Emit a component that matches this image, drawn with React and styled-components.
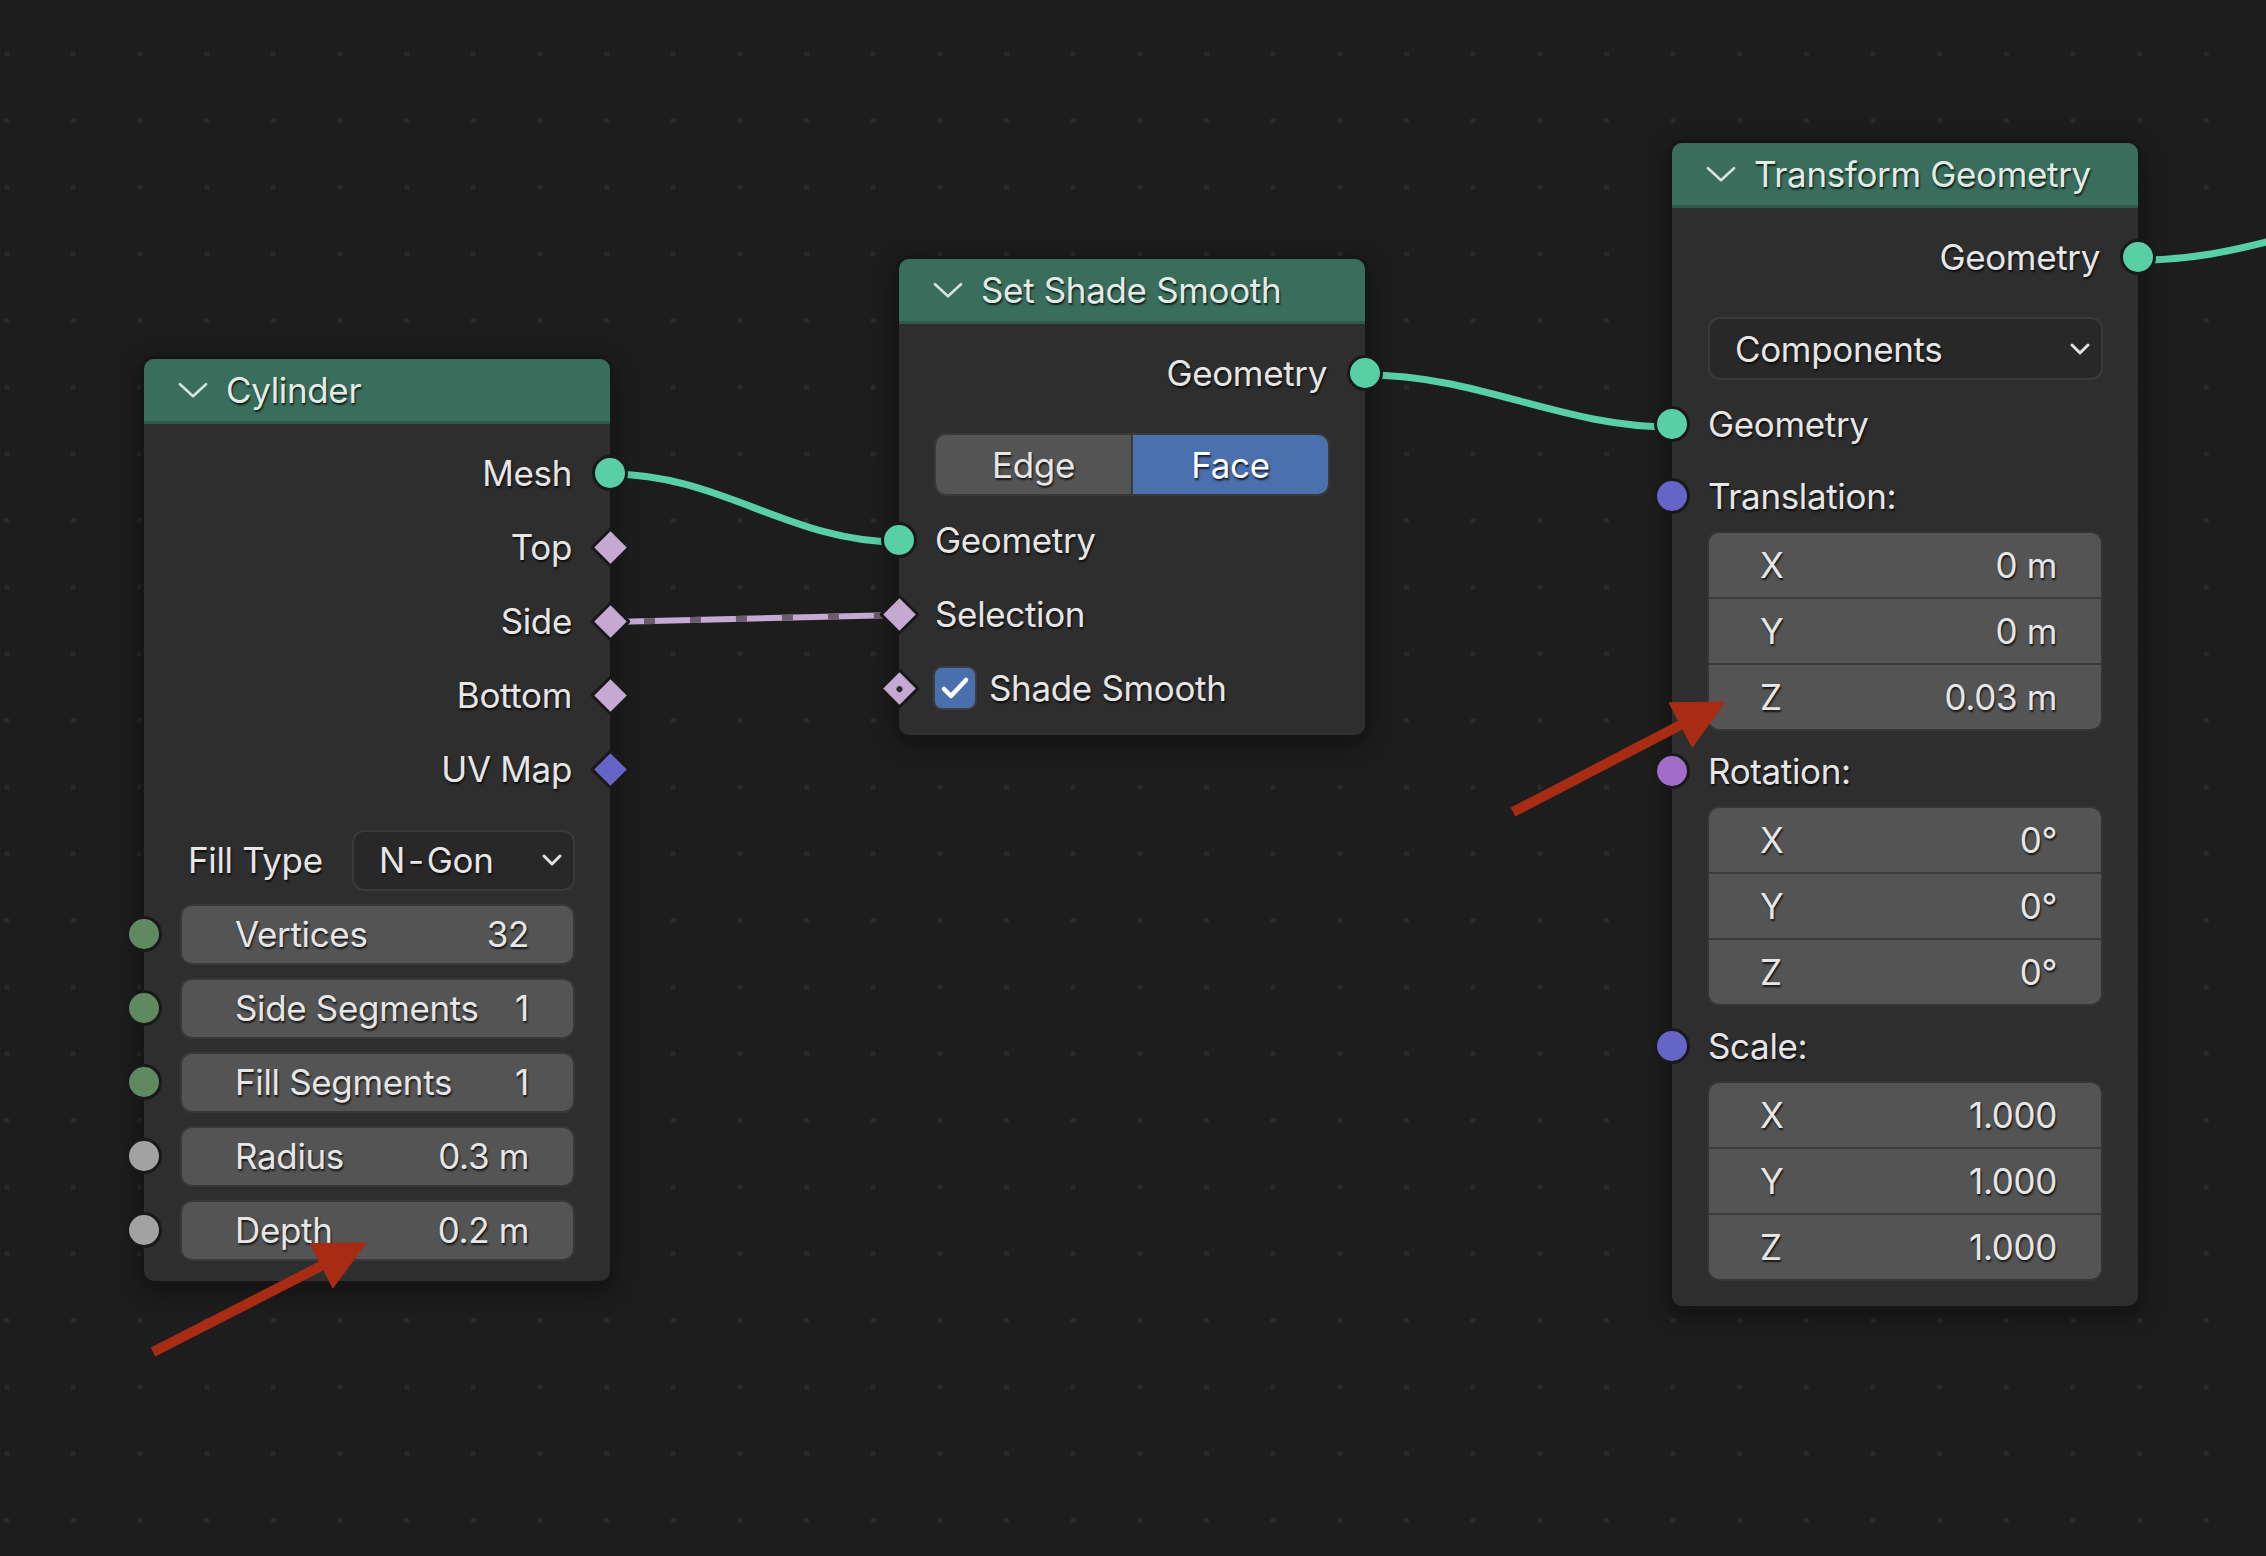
import styled, { createGlobalStyle } from "styled-components";

const GlobalStyle = createGlobalStyle`
  html, body {
    margin: 0;
    padding: 0;
    background: #1d1d1d;
  }
  body {
    font-family: Inter, "Noto Sans", "Liberation Sans", sans-serif;
    color: #e6e6e6;
  }
`;

const Canvas = styled.div`
  position: relative;
  width: 2266px;
  height: 1556px;
  overflow: hidden;
  background-color: #1d1d1d;
  background-image: radial-gradient(circle, #2b2b2b 2.4px, transparent 3px);
  background-size: 66.67px 66.67px;
  background-position: -26.67px 20.67px;
`;

const Layer = styled.svg`
  position: absolute;
  left: 0;
  top: 0;
  width: 2266px;
  height: 1556px;
  pointer-events: none;
  z-index: ${(p) => p.$z};
`;

const Node = styled.div`
  position: absolute;
  z-index: 1;
  left: ${(p) => p.$x}px;
  top: ${(p) => p.$y}px;
  width: ${(p) => p.$w}px;
  box-sizing: border-box;
  background: #2e2e2e;
  border: 3px solid #161616;
  border-radius: 13px;
  box-shadow: 0 6px 26px rgba(0, 0, 0, 0.45);
  font-size: 35px;
  letter-spacing: -0.35px;
  text-shadow: 1px 2px 2px rgba(0, 0, 0, 0.75);
`;

const Header = styled.div`
  height: 62px;
  display: flex;
  align-items: center;
  gap: 18px;
  padding-left: 34px;
  background: #3a6e5c;
  border-bottom: 3px solid #2d5a4a;
  border-radius: 10px 10px 0 0;
  color: #e3ebe7;
`;

const Body = styled.div`
  padding: 12px 35px ${(p) => p.$pb}px;
  display: flex;
  flex-direction: column;
`;

const Row = styled.div`
  position: relative;
  height: ${(p) => p.$h || 74}px;
  margin-top: ${(p) => p.$mt || 0}px;
  display: flex;
  align-items: center;
  justify-content: ${(p) => (p.$out ? "flex-end" : "flex-start")};
  padding-right: ${(p) => (p.$out ? 3 : 0)}px;
  padding-left: ${(p) => (p.$out ? 0 : 1)}px;
`;

const Socket = styled.span`
  position: absolute;
  top: 50%;
  ${(p) => (p.$out ? "right: -35px;" : "left: -35px;")}
  transform: translate(${(p) => (p.$out ? "50%" : "-50%")}, -50%);
  width: 30px;
  height: 30px;
  border-radius: 50%;
  background: ${(p) => p.$color};
  border: 3px solid #191919;
`;

const Diamond = styled.span`
  position: absolute;
  top: 50%;
  ${(p) => (p.$out ? "right: -35px;" : "left: -35px;")}
  width: 23px;
  height: 23px;
  margin-top: -14.5px;
  ${(p) => (p.$out ? "margin-right: -14.5px;" : "margin-left: -14.5px;")}
  transform: rotate(45deg);
  border-radius: 2px;
  background: ${(p) => p.$color};
  border: 3px solid #191919;
  display: flex;
  align-items: center;
  justify-content: center;

  &::after {
    content: "";
    display: ${(p) => (p.$dot ? "block" : "none")};
    width: 6px;
    height: 6px;
    border-radius: 50%;
    background: #2a2a2a;
  }
`;

const Field = styled.div`
  flex: 1;
  height: 61px;
  box-sizing: border-box;
  display: flex;
  align-items: center;
  justify-content: space-between;
  padding: 0 44px 0 53px;
  background: #545454;
  border: 2px solid #383838;
  border-radius: 12px;
`;

const Dropdown = styled.div`
  width: ${(p) => (p.$w ? `${p.$w}px` : "auto")};
  flex: ${(p) => (p.$w ? "none" : 1)};
  margin-left: auto;
  height: ${(p) => p.$h || 61}px;
  box-sizing: border-box;
  display: flex;
  align-items: center;
  justify-content: space-between;
  padding: 0 10px 0 25px;
  background: #282828;
  border: 2px solid #3a3a3a;
  border-radius: 12px;
`;

const Label = styled.span`
  margin-left: ${(p) => p.$ml || 0}px;
  white-space: nowrap;
`;

const Hyphen = styled.span`
  margin: 0 3px;
`;

const Segmented = styled.div`
  height: 63px;
  margin-top: 23px;
  display: flex;
  box-sizing: border-box;
  border: 2px solid #393939;
  border-radius: 12px;
  overflow: hidden;
`;

const Segment = styled.div`
  flex: 1;
  display: flex;
  align-items: center;
  justify-content: center;
  background: ${(p) => (p.$active ? "#4a70ae" : "#545454")};
  color: ${(p) => (p.$active ? "#ffffff" : "#e6e6e6")};
  & + & {
    border-left: 2px solid #3a3a3a;
  }
`;

const Check = styled.span`
  width: 44px;
  height: 44px;
  box-sizing: border-box;
  border: 2px solid #3d3d3d;
  border-radius: 9px;
  background: #4a6fad;
  display: flex;
  align-items: center;
  justify-content: center;
  margin-left: -2px;
  margin-right: 12px;
`;

const VectorBlock = styled.div`
  display: flex;
  flex-direction: column;
  margin-top: ${(p) => p.$mt || 0}px;
  border: 2px solid #353535;
  border-radius: 12px;
  overflow: hidden;
  background: #545454;
`;

const VectorRow = styled.div`
  height: 64px;
  display: flex;
  align-items: center;
  justify-content: space-between;
  padding: 0 44px 0 51px;
  & + & {
    border-top: 2px solid #3c3c3c;
  }
`;

const Chevron = ({ size = 30 }) => (
  <svg width={size} height={size * 0.55} viewBox="0 0 30 16">
    <path d="M2 2 L15 14 L28 2" fill="none" stroke="#d6e2dd" strokeWidth="2.6" strokeLinejoin="round" strokeLinecap="round" />
  </svg>
);

const SmallChevron = () => (
  <svg width="22" height="14" viewBox="0 0 22 14">
    <path d="M3 3 L11 11 L19 3" fill="none" stroke="#e0e0e0" strokeWidth="3" strokeLinecap="round" strokeLinejoin="round" />
  </svg>
);

const CheckMark = () => (
  <svg width="30" height="26" viewBox="0 0 30 26">
    <path d="M4 14 L11 21 L26 5" fill="none" stroke="#ffffff" strokeWidth="4.5" strokeLinecap="round" strokeLinejoin="round" />
  </svg>
);

const GEO = "#58cfa5";
const FIELD = "#c6a9d3";
const VEC = "#6565c8";
const INT = "#5f8a61";
const FLOAT = "#a2a2a2";
const ROT = "#a26dc9";

const arrow = (tx, ty, hx, hy) => {
  const len = Math.hypot(hx - tx, hy - ty);
  const dx = (hx - tx) / len;
  const dy = (hy - ty) / len;
  const bx = hx - dx * 50;
  const by = hy - dy * 50;
  const nx = -dy * 25;
  const ny = dx * 25;
  return {
    line: `M${tx} ${ty} L${bx + dx * 4} ${by + dy * 4}`,
    head: `${hx},${hy} ${bx + nx},${by + ny} ${bx - nx},${by - ny}`,
  };
};

const arrows = [arrow(153, 1352, 366, 1243), arrow(1513, 812, 1725, 702)];

const vectors = {
  translation: ["0 m", "0 m", "0.03 m"],
  rotation: ["0°", "0°", "0°"],
  scale: ["1.000", "1.000", "1.000"],
};

const Vector = ({ values, mt }) => (
  <VectorBlock $mt={mt}>
    {["X", "Y", "Z"].map((axis, i) => (
      <VectorRow key={axis}>
        <span>{axis}</span>
        <span>{values[i]}</span>
      </VectorRow>
    ))}
  </VectorBlock>
);

const cylinderInputs = [
  { name: "Vertices", value: "32", color: INT },
  { name: "Side Segments", value: "1", color: INT },
  { name: "Fill Segments", value: "1", color: INT },
  { name: "Radius", value: "0.3 m", color: FLOAT },
  { name: "Depth", value: "0.2 m", color: FLOAT },
];

const App = () => {
  return (
    <Canvas>
      <GlobalStyle />
      <Layer $z={0} viewBox="0 0 2266 1556">
        <g fill="none" strokeLinecap="round">
          <path d="M611 474 C 720 474, 790 542, 898 542" stroke={GEO} strokeWidth="7" />
          <path d="M1366 375 C 1480 375, 1560 427, 1672 427" stroke={GEO} strokeWidth="7" />
          <path d="M2139 260 C 2190 260, 2230 252, 2290 236" stroke={GEO} strokeWidth="7" />
          <path d="M611 622 L 898 615" stroke={FIELD} strokeWidth="6" strokeLinecap="butt" />
          <path d="M611 622 L 898 615" stroke="#6b5b70" strokeWidth="6" strokeLinecap="butt" strokeDasharray="11 35" strokeDashoffset="-33" />
        </g>
      </Layer>

      <Node $x={141} $y={356} $w={472}>
        <Header>
          <Chevron />
          <span>Cylinder</span>
        </Header>
        <Body $pb={14}>
          {["Mesh", "Top", "Side", "Bottom", "UV Map"].map((name, i) => (
            <Row key={name} $out>
              <Label>{name}</Label>
              {i === 0 ? (
                <Socket $out $color={GEO} />
              ) : (
                <Diamond $out $color={i === 4 ? VEC : FIELD} />
              )}
            </Row>
          ))}
          <Row $mt={17}>
            <Label $ml={8}>Fill Type</Label>
            <Dropdown $w={223}>
              <span>
                N<Hyphen>-</Hyphen>Gon
              </span>
              <SmallChevron />
            </Dropdown>
          </Row>
          {cylinderInputs.map((input) => (
            <Row key={input.name}>
              <Socket $color={input.color} />
              <Field>
                <span>{input.name}</span>
                <span>{input.value}</span>
              </Field>
            </Row>
          ))}
        </Body>
      </Node>

      <Node $x={896} $y={256} $w={472}>
        <Header>
          <Chevron />
          <span>Set Shade Smooth</span>
        </Header>
        <Body $pb={10}>
          <Row $out>
            <Label>Geometry</Label>
            <Socket $out $color={GEO} />
          </Row>
          <Segmented>
            <Segment>Edge</Segment>
            <Segment $active>Face</Segment>
          </Segmented>
          <Row $mt={7}>
            <Socket $color={GEO} />
            <Label>Geometry</Label>
          </Row>
          <Row>
            <Diamond $color={FIELD} />
            <Label>Selection</Label>
          </Row>
          <Row>
            <Diamond $color={FIELD} $dot />
            <Check>
              <CheckMark />
            </Check>
            <Label>Shade Smooth</Label>
          </Row>
        </Body>
      </Node>

      <Node $x={1669} $y={140} $w={472}>
        <Header>
          <Chevron />
          <span>Transform Geometry</span>
        </Header>
        <Body $pb={25}>
          <Row $out>
            <Label>Geometry</Label>
            <Socket $out $color={GEO} />
          </Row>
          <Row $h={63} $mt={23}>
            <Dropdown $h={63}>
              <span>Components</span>
              <SmallChevron />
            </Dropdown>
          </Row>
          <Row $mt={7}>
            <Socket $color={GEO} />
            <Label>Geometry</Label>
          </Row>
          <Row $h={70}>
            <Socket $color={VEC} />
            <Label>Translation:</Label>
          </Row>
          <Vector values={vectors.translation} />
          <Row $h={70} $mt={5}>
            <Socket $color={ROT} />
            <Label>Rotation:</Label>
          </Row>
          <Vector values={vectors.rotation} />
          <Row $h={70} $mt={5}>
            <Socket $color={VEC} />
            <Label>Scale:</Label>
          </Row>
          <Vector values={vectors.scale} />
        </Body>
      </Node>

      <Layer $z={2} viewBox="0 0 2266 1556">
        {arrows.map((a, i) => (
          <g key={i} fill="#a82c14" stroke="#a82c14">
            <path d={a.line} strokeWidth="10" fill="none" />
            <polygon points={a.head} strokeWidth="1" />
          </g>
        ))}
      </Layer>
    </Canvas>
  );
};

export default App;
